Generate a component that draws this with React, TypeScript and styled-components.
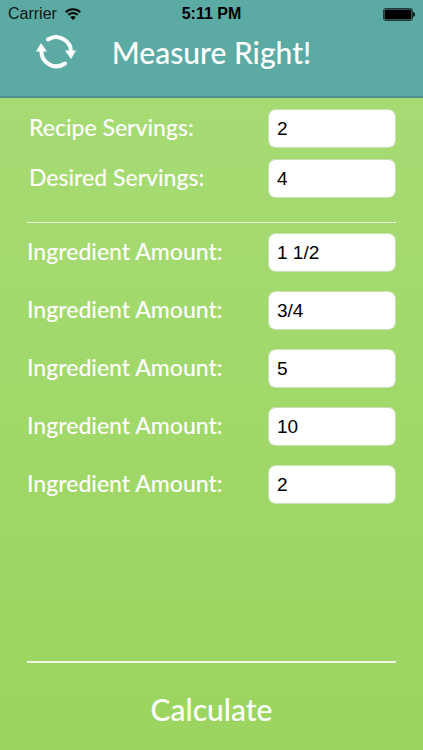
import React from "react";
import styled, { createGlobalStyle } from "styled-components";

const GlobalStyle = createGlobalStyle`
  * {
    box-sizing: border-box;
  }
  body {
    margin: 0;
    font-family: Futura, Lato, sans-serif;
    color: #ffffff;
  }
`;

const Screen = styled.div`
  display: flex;
  flex-direction: column;
  min-height: 100vh;
  background: linear-gradient(#a8dc77, #9bd55f);
`;

const Header = styled.header`
  height: 98px;
  background: #5caaa4;
  border-bottom: 2px solid #4b918d;
`;

const StatusBar = styled.div`
  display: grid;
  grid-template-columns: 1fr auto 1fr;
  align-items: center;
  height: 28px;
  padding: 0 8px;
  font: 16px/20px "Liberation Sans", sans-serif;
  color: #0c1918;
`;

const Carrier = styled.div`
  display: flex;
  align-items: center;
  gap: 8px;
`;

const Clock = styled.span`
  font-weight: 700;
  color: #000000;
`;

const Battery = styled.svg`
  justify-self: end;
`;

const TitleBar = styled.div`
  display: grid;
  grid-template-columns: 1fr auto 1fr;
  align-items: center;
  height: 48px;
  padding: 0 36px;
`;

const ResetButton = styled.button`
  display: flex;
  justify-self: start;
  padding: 0;
  border: 0;
  background: none;
  color: #ffffff;
  cursor: pointer;
`;

const Title = styled.h1`
  margin: 0;
  font-size: 30px;
  font-weight: 500;
  line-height: 40px;
  white-space: nowrap;
`;

const Form = styled.form`
  display: flex;
  flex: 1;
  flex-direction: column;
  padding: 11px 27px 0;
`;

const Fields = styled.div<{ $gap: number; $inset?: number }>`
  display: flex;
  flex-direction: column;
  gap: ${({ $gap }) => $gap}px;
  padding-left: ${({ $inset = 0 }) => $inset}px;
`;

const FieldRow = styled.div`
  display: flex;
  align-items: center;
  justify-content: space-between;
`;

const Label = styled.label`
  padding-bottom: 3px;
  font-size: 23px;
  font-weight: 500;
  line-height: 32px;
  white-space: nowrap;
`;

const Input = styled.input`
  width: 128px;
  height: 39px;
  padding: 0 8px;
  border: 1px solid #c9dfb4;
  border-radius: 7px;
  background: #ffffff;
  background-clip: padding-box;
  color: #000000;
  font: 19px/24px "Liberation Sans", sans-serif;
`;

const Divider = styled.hr<{ $thickness: number }>`
  width: 100%;
  height: ${({ $thickness }) => $thickness}px;
  margin: 0;
  border: 0;
  background: #f0fbe2;
`;

const Separator = styled.div`
  padding: 24px 0 10px;
`;

const Footer = styled.footer`
  display: flex;
  flex-direction: column;
  align-items: center;
  gap: 22px;
  margin-top: auto;
  padding: 24px 0 17px;
`;

const CalculateButton = styled.button`
  padding: 0 16px;
  border: 0;
  background: none;
  color: #ffffff;
  font-family: inherit;
  font-size: 30px;
  font-weight: 500;
  line-height: 48px;
  cursor: pointer;
`;

const servings = [
  { id: "recipe", label: "Recipe Servings:", value: "2" },
  { id: "desired", label: "Desired Servings:", value: "4" },
];

const ingredients = ["1 1/2", "3/4", "5", "10", "2"];

function Field({ id, label, value }: { id: string; label: string; value: string }) {
  return (
    <FieldRow>
      <Label htmlFor={id}>{label}</Label>
      <Input id={id} type="text" defaultValue={value} />
    </FieldRow>
  );
}

function WifiIcon() {
  return (
    <svg width="16" height="12" viewBox="0 0 16 12" fill="none" stroke="#000" strokeWidth="2" aria-hidden="true">
      <path d="M.8 4.3a10.2 10.2 0 0 1 14.4 0" />
      <path d="M3.3 6.9a6.7 6.7 0 0 1 9.4 0" />
      <path d="M8 12 5.3 9.2a3.9 3.9 0 0 1 5.4 0Z" fill="#000" stroke="none" />
    </svg>
  );
}

function BatteryIcon() {
  return (
    <Battery width="33" height="13" viewBox="0 0 33 13" role="img" aria-label="Battery full">
      <rect x="1.5" y=".5" width="29" height="12" rx="2" fill="none" stroke="#1e3a38" />
      <rect x="2.500" y="1.500" width="27" height="10" rx="1" fill="#000" />
      <path d="M31 4c1.300.3 2 1.200 2 2.500s-.7 2.200-2 2.500Z" fill="#0c1918" />
    </Battery>
  );
}

function ResetIcon() {
  return (
    <svg width="41" height="36" viewBox="0 0 41 36" aria-hidden="true">
      <g fill="none" stroke="currentColor" strokeWidth="4">
        <path d="M12 5.500A15 15 0 0 1 35 19" strokeLinecap="round" />
        <path d="M29 29.500A15 15 0 0 1 5.500 16" strokeLinecap="round" />
      </g>
      <path d="M29 16.500h11l-5 8.500Z" fill="currentColor" />
      <path d="M0 17.500 5 9l6 8.500Z" fill="currentColor" />
    </svg>
  );
}

export default function App() {
  return (
    <Screen>
      <GlobalStyle />
      <Header>
        <StatusBar>
          <Carrier>
            Carrier
            <WifiIcon />
          </Carrier>
          <Clock>5:11 PM</Clock>
          <BatteryIcon />
        </StatusBar>
        <TitleBar>
          <ResetButton type="button" aria-label="Reset">
            <ResetIcon />
          </ResetButton>
          <Title>Measure Right!</Title>
        </TitleBar>
      </Header>
      <Form onSubmit={(event) => event.preventDefault()}>
        <Fields $gap={11} $inset={2}>
          {servings.map((field) => (
            <Field key={field.id} {...field} />
          ))}
        </Fields>
        <Separator>
          <Divider $thickness={1} />
        </Separator>
        <Fields $gap={19}>
          {ingredients.map((value, index) => (
            <Field key={index} id={`ingredient-${index}`} label="Ingredient Amount:" value={value} />
          ))}
        </Fields>
        <Footer>
          <Divider $thickness={2} />
          <CalculateButton type="submit">Calculate</CalculateButton>
        </Footer>
      </Form>
    </Screen>
  );
}
